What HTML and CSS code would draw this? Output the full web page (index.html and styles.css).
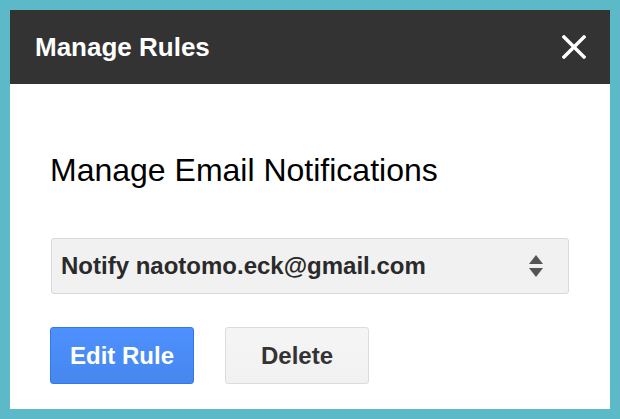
FILE: index.html
```html
<!DOCTYPE html>
<html lang="en">
<head>
    <meta charset="UTF-8">
    <title>Manage Rules</title>
    <link rel="stylesheet" href="styles.css">
</head>
<body>
    <div class="dialog">
        <!-- Cabeçalho -->
        <div class="dialog-header">
            <span class="dialog-title">Manage Rules</span>
            <button class="close-btn" aria-label="Close">
                <svg width="24" height="24" viewBox="0 0 24 24">
                    <path d="M2 2 L22 22 M22 2 L2 22" stroke="#fff" stroke-width="3.4" stroke-linecap="square"/>
                </svg>
            </button>
        </div>

        <div class="dialog-body">
            <h2 class="section-title">Manage Email Notifications</h2>

            <div class="rule-select">
                <span class="rule-text">Notify naotomo.eck@gmail.com</span>
                <svg class="select-arrows" width="14" height="24" viewBox="0 0 14 24">
                    <path d="M7 1 L14 10 L0 10 Z" fill="#555"/>
                    <path d="M0 14 L14 14 L7 23 Z" fill="#555"/>
                </svg>
            </div>

            <div class="actions">
                <button class="btn btn-primary">Edit Rule</button>
                <button class="btn btn-default">Delete</button>
            </div>
        </div>
    </div>
</body>
</html>
```

FILE: styles.css
```css
/* Reset básico */
* {
    margin: 0;
    padding: 0;
    box-sizing: border-box;
}

body {
    font-family: 'Liberation Sans', Arial, sans-serif;
    background: #5bb9c8;
    padding: 10px;
    width: 620px;
    height: 419px;
}

/* Janela */
.dialog {
    width: 600px;
    height: 399px;
    background: #fff;
    display: flex;
    flex-direction: column;
}

.dialog-header {
    height: 74px;
    background: #333;
    display: flex;
    align-items: center;
    justify-content: space-between;
    padding: 0 24px 0 25px;
}

.dialog-title {
    color: #fff;
    font-size: 26px;
    font-weight: bold;
    line-height: 26px;
}

.close-btn {
    background: none;
    border: none;
    width: 24px;
    height: 24px;
    display: flex;
    cursor: pointer;
}

.dialog-body {
    padding: 70px 40px 0 40px;
}

.section-title {
    font-size: 32px;
    font-weight: normal;
    line-height: 32px;
    color: #000;
    margin-bottom: 52px;
}

/* Seletor */
.rule-select {
    margin-left: 1px;
    width: 518px;
    height: 56px;
    background: #f1f1f1;
    border: 1px solid #d9d9d9;
    border-radius: 3px;
    display: flex;
    align-items: center;
    justify-content: space-between;
    padding: 0 25px 0 9px;
}

.rule-text {
    font-size: 24px;
    font-weight: bold;
    line-height: 24px;
    color: #2a2a2a;
}

.select-arrows {
    display: block;
}

/* Botões */
.actions {
    display: flex;
    gap: 31px;
    margin-top: 33px;
}

.btn {
    width: 144px;
    height: 57px;
    font-family: inherit;
    font-size: 24px;
    font-weight: bold;
    line-height: 24px;
    border-radius: 3px;
    cursor: pointer;
}

.btn-primary {
    background: linear-gradient(#4d90fe, #4787ed);
    border: 1px solid #3079ed;
    color: #fff;
}

.btn-default {
    background: linear-gradient(#f5f5f5, #f1f1f1);
    border: 1px solid #dcdcdc;
    color: #333;
}
```
